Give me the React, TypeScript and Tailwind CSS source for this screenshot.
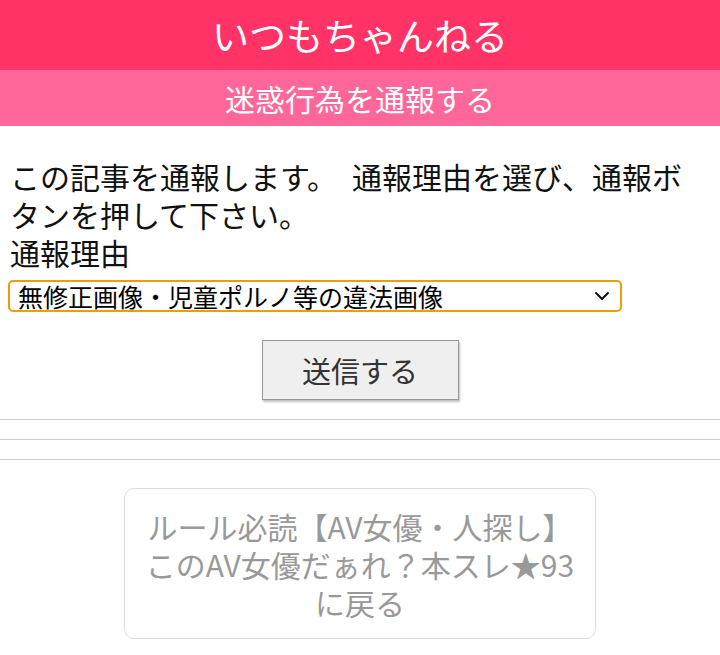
const font = { fontFamily: '"Noto Sans CJK JP", "Noto Sans", sans-serif' };

function Chevron() {
  return (
    <svg width="16" height="10" viewBox="0 0 16 10" fill="none" stroke="#111" strokeWidth="2" strokeLinecap="round" strokeLinejoin="round">
      <polyline points="2,2 8,8 14,2" />
    </svg>
  );
}

export default function App() {
  return (
    <div className="w-[720px] h-[655px] overflow-hidden bg-white" style={font}>
      <header className="h-[70px] bg-[#ff3366] flex items-center justify-center">
        <h1 className="text-[37px] leading-none text-white">いつもちゃんねる</h1>
      </header>
      <div className="h-[56px] bg-[#ff6699] flex items-center justify-center">
        <h2 className="text-[30px] leading-none text-white">迷惑行為を通報する</h2>
      </div>

      <main className="pt-[31px]">
        <form className="px-[10px]">
          <div className="text-[30px] leading-[38px] text-[#111]">
            <div>この記事を通報します。　通報理由を選び、通報ボ</div>
            <div>タンを押して下さい。</div>
            <div>通報理由</div>
          </div>
          <div className="mt-[9px] w-[614px] -ml-[2px] h-[32px] border-2 border-[#eb9e0c] rounded-[5px] flex items-center pl-[8px] pr-[10px]">
            <span className="flex-1 text-[25px] leading-none text-black whitespace-nowrap">無修正画像・児童ポルノ等の違法画像</span>
            <Chevron />
          </div>
          <div className="flex justify-center mt-[28px]">
            <button
              type="button"
              className="w-[197px] h-[60px] bg-[#efefef] border border-[#999] shadow-[1px_2px_2px_rgba(0,0,0,0.25)] text-[29px] text-[#333] leading-none"
            >
              送信する
            </button>
          </div>
        </form>

        <div className="mt-[19px]">
          <hr className="border-t border-[#ccc]" />
          <hr className="mt-[19px] border-t border-[#ccc]" />
          <hr className="mt-[19px] border-t border-[#ccc]" />
        </div>

        <div className="flex justify-center mt-[28px]">
          <a className="w-[472px] h-[151px] border border-[#ddd] rounded-[10px] flex flex-col items-center justify-center text-center text-[30px] leading-[38px] text-[#999]">
            <span>ルール必読【AV女優・人探し】</span>
            <span>このAV女優だぁれ？本スレ★93</span>
            <span>に戻る</span>
          </a>
        </div>
      </main>
    </div>
  );
}
